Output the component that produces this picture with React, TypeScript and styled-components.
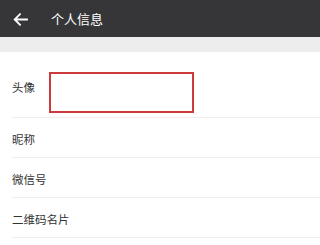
import React from 'react';
import styled, { createGlobalStyle } from 'styled-components';

const GlobalStyle = createGlobalStyle`
  html, body {
    margin: 0;
    padding: 0;
    background: #ffffff;
  }
  body {
    font-family: "Noto Sans CJK SC", "Noto Sans", sans-serif;
    color: #333333;
  }
`;

const rows = ['昵称', '微信号', '二维码名片'];

export default function App() {
  return (
    <Page>
      <GlobalStyle />
      <Header>
        <BackButton aria-label="返回">
          <svg width="15" height="13" viewBox="0 0 15 13" fill="none">
            <path d="M14 6.5H2M7 1.2L1.7 6.5 7 11.8" stroke="#ffffff" strokeWidth="1.8" strokeLinecap="square" />
          </svg>
        </BackButton>
        <Title>个人信息</Title>
      </Header>
      <Band />
      <AvatarRow>
        <Label>头像</Label>
        <AvatarBox />
      </AvatarRow>
      {rows.map((r) => (
        <Row key={r}>
          <Label>{r}</Label>
        </Row>
      ))}
    </Page>
  );
}

const Page = styled.div`
  width: 100%;
  min-height: 245px;
  background: #ffffff;
`;

const Header = styled.div`
  height: 37px;
  background: #363638;
  display: flex;
  align-items: center;
  padding-left: 13px;
  box-sizing: border-box;
`;

const BackButton = styled.div`
  width: 15px;
  height: 13px;
  display: flex;
  margin-top: 1px;
`;

const Title = styled.div`
  margin-left: 23px;
  color: #ffffff;
  font-size: 13px;
  line-height: 16px;
`;

const Band = styled.div`
  height: 15px;
  background: #ededed;
`;

const AvatarRow = styled.div`
  height: 66px;
  box-sizing: border-box;
  display: flex;
  align-items: flex-start;
  padding-top: 20px;
  margin-left: 12px;
  border-bottom: 1px solid #efefef;
`;

const Label = styled.div`
  width: 37px;
  font-size: 11.5px;
  line-height: 14px;
  white-space: nowrap;
  margin-top: 8px;
  color: #333333;
`;

const AvatarBox = styled.div`
  width: 145px;
  height: 41px;
  box-sizing: border-box;
  border: 2px solid #cc3a3e;
  background: #ffffff;
`;

const Row = styled.div`
  height: 40px;
  box-sizing: border-box;
  display: flex;
  align-items: center;
  padding-top: 2px;
  margin-left: 12px;
  border-bottom: 1px solid #efefef;

  ${Label} {
    margin-top: 0;
  }
`;
